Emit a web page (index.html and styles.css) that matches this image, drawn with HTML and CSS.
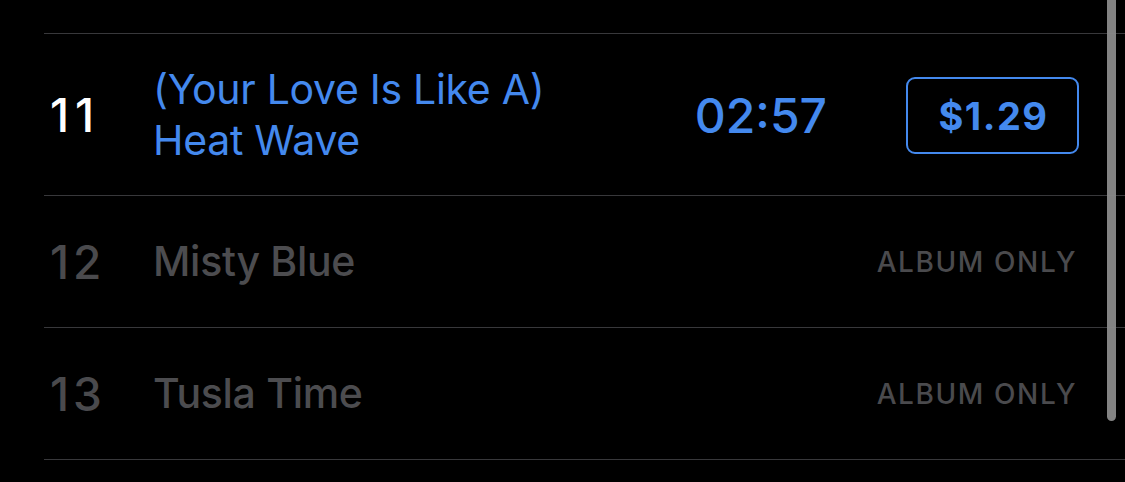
FILE: index.html
```html
<!DOCTYPE html>
<html lang="en">
<head>
<meta charset="utf-8">
<title>Tracks</title>
<link rel="stylesheet" href="styles.css">
</head>
<body>
<div class="screen">
  <ul class="tracks">
    <li class="track track--active">
      <span class="track__num">11</span>
      <span class="track__title">(Your Love Is Like A)<br>Heat Wave</span>
      <span class="track__time">02:57</span>
      <button class="track__price">$1.29</button>
    </li>
    <li class="track track--disabled">
      <span class="track__num">12</span>
      <span class="track__title">Misty Blue</span>
      <span class="track__album">ALBUM ONLY</span>
    </li>
    <li class="track track--disabled">
      <span class="track__num">13</span>
      <span class="track__title">Tusla Time</span>
      <span class="track__album">ALBUM ONLY</span>
    </li>
  </ul>
  <div class="scrollbar"></div>
</div>
</body>
</html>
```

FILE: styles.css
```css
html, body {
  margin: 0;
  padding: 0;
  background: #000;
}

.screen {
  position: relative;
  width: 1125px;
  height: 482px;
  overflow: hidden;
  background: #000;
  font-family: "Inter", "Liberation Sans", sans-serif;
}

.tracks {
  list-style: none;
  margin: 0;
  padding: 33px 0 0 44px;
}

.track {
  display: flex;
  align-items: center;
  height: 131px;
  border-top: 1px solid #38383b;
  padding: 0 46px 0 6px;
}

.track:last-child {
  border-bottom: 1px solid #38383b;
}

.track--active {
  height: 161px;
}

.track__num {
  width: 103px;
  flex: none;
  font-size: 46px;
  font-weight: 500;
  letter-spacing: 6px;
}

.track--active .track__num {
  color: #ffffff;
}

.track--disabled .track__num {
  color: #4a4a4d;
  letter-spacing: 4px;
}

.track__title {
  flex: 1;
  font-size: 41px;
  line-height: 51px;
  font-weight: 400;
  letter-spacing: -0.3px;
}

.track--active .track__title {
  color: #4489ee;
}

.track--disabled .track__title {
  color: #4c4c4f;
  font-weight: 500;
}

.track__time {
  color: #4489ee;
  font-size: 48px;
  font-weight: 500;
  margin-right: 79px;
  padding-top: 2px;
}

.track__price {
  width: 173px;
  height: 77px;
  box-sizing: border-box;
  border: 2px solid #4489ee;
  border-radius: 9px;
  background: transparent;
  color: #4489ee;
  font-family: "Inter", "Liberation Sans", sans-serif;
  font-size: 38px;
  font-weight: 700;
  letter-spacing: 1.5px;
  padding: 0 0 0 2px;
  margin-top: 2px;
}

.track__album {
  color: #4a4a4d;
  font-size: 28px;
  font-weight: 500;
  letter-spacing: 1.6px;
  margin-right: 2px;
}

.scrollbar {
  position: absolute;
  top: 0;
  right: 9px;
  width: 9px;
  height: 421px;
  border-radius: 0 0 5px 5px;
  background: rgba(138, 138, 138, 0.95);
}
```
